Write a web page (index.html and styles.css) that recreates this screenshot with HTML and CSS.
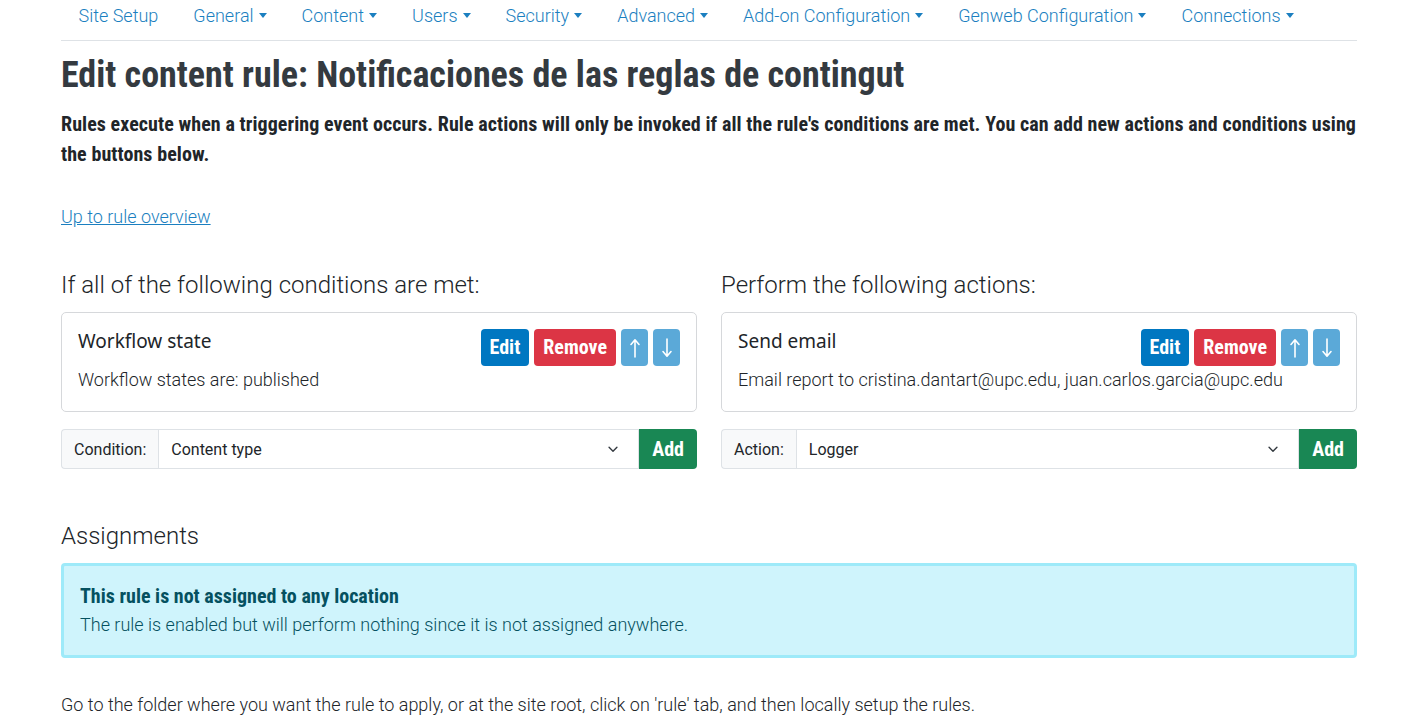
FILE: index.html
```html
<!DOCTYPE html>
<html lang="en">
<head>
<meta charset="utf-8">
<title>Edit content rule</title>
<link rel="stylesheet" href="styles.css">
</head>
<body>
<div class="page">
  <nav class="topnav">
    <a class="nav-link" href="#">Site Setup</a>
    <a class="nav-link dd" href="#">General</a>
    <a class="nav-link dd" href="#">Content</a>
    <a class="nav-link dd" href="#">Users</a>
    <a class="nav-link dd" href="#">Security</a>
    <a class="nav-link dd" href="#">Advanced</a>
    <a class="nav-link dd" href="#">Add-on Configuration</a>
    <a class="nav-link dd" href="#">Genweb Configuration</a>
    <a class="nav-link dd" href="#">Connections</a>
  </nav>

  <h1 class="title">Edit content rule: Notificaciones de las reglas de contingut</h1>
  <p class="lead">Rules execute when a triggering event occurs. Rule actions will only be invoked if all the rule's conditions are met. You can add new actions and conditions using the buttons below.</p>

  <p class="back"><a href="#">Up to rule overview</a></p>

  <div class="cols">
    <section class="col">
      <h2 class="sec-title">If all of the following conditions are met:</h2>
      <div class="card">
        <div class="card-row">
          <h3 class="card-title">Workflow state</h3>
          <div class="btns">
            <button class="btn btn-edit">Edit</button>
            <button class="btn btn-remove">Remove</button>
            <button class="btn btn-move" aria-label="Move up"><svg viewBox="0 0 12 24" width="12" height="24"><path d="M6 21V4M2 8.5L6 3.8l4 4.7" fill="none" stroke="#fff" stroke-width="1.6" stroke-linecap="round" stroke-linejoin="round"/></svg></button>
            <button class="btn btn-move" aria-label="Move down"><svg viewBox="0 0 12 24" width="12" height="24"><path d="M6 3v17M2 15.5L6 20.2l4-4.7" fill="none" stroke="#fff" stroke-width="1.6" stroke-linecap="round" stroke-linejoin="round"/></svg></button>
          </div>
        </div>
        <div class="card-desc">Workflow states are: published</div>
      </div>
      <div class="input-group">
        <span class="ig-label">Condition:</span>
        <div class="ig-select"><span>Content type</span>
          <svg class="chev" viewBox="0 0 16 16" width="14" height="14"><path d="M3.5 6l4.5 4.5L12.5 6" fill="none" stroke="#343a40" stroke-width="1.6" stroke-linecap="round" stroke-linejoin="round"/></svg>
        </div>
        <button class="btn btn-add">Add</button>
      </div>
    </section>

    <section class="col">
      <h2 class="sec-title">Perform the following actions:</h2>
      <div class="card">
        <div class="card-row">
          <h3 class="card-title">Send email</h3>
          <div class="btns">
            <button class="btn btn-edit">Edit</button>
            <button class="btn btn-remove">Remove</button>
            <button class="btn btn-move" aria-label="Move up"><svg viewBox="0 0 12 24" width="12" height="24"><path d="M6 21V4M2 8.5L6 3.8l4 4.7" fill="none" stroke="#fff" stroke-width="1.6" stroke-linecap="round" stroke-linejoin="round"/></svg></button>
            <button class="btn btn-move" aria-label="Move down"><svg viewBox="0 0 12 24" width="12" height="24"><path d="M6 3v17M2 15.5L6 20.2l4-4.7" fill="none" stroke="#fff" stroke-width="1.6" stroke-linecap="round" stroke-linejoin="round"/></svg></button>
          </div>
        </div>
        <div class="card-desc">Email report to cristina.dantart@upc.edu, juan.carlos.garcia@upc.edu</div>
      </div>
      <div class="input-group">
        <span class="ig-label">Action:</span>
        <div class="ig-select"><span>Logger</span>
          <svg class="chev" viewBox="0 0 16 16" width="14" height="14"><path d="M3.5 6l4.5 4.5L12.5 6" fill="none" stroke="#343a40" stroke-width="1.6" stroke-linecap="round" stroke-linejoin="round"/></svg>
        </div>
        <button class="btn btn-add">Add</button>
      </div>
    </section>
  </div>

  <h2 class="sec-title assign">Assignments</h2>
  <div class="alert">
    <div class="alert-title">This rule is not assigned to any location</div>
    <div class="alert-text">The rule is enabled but will perform nothing since it is not assigned anywhere.</div>
  </div>

  <p class="foot">Go to the folder where you want the rule to apply, or at the site root, click on 'rule' tab, and then locally setup the rules.</p>
</div>
</body>
</html>
```

FILE: styles.css
```css
* { box-sizing: border-box; }
html, body { margin: 0; padding: 0; background: #fff; }
body {
  font-family: Roboto, "Liberation Sans", sans-serif;
  font-weight: 300;
  font-size: 18px;
  color: #212529;
}
.page {
  width: 1296px;
  margin-left: 61px;
}
.topnav {
  display: flex;
  height: 41px;
  border-bottom: 1px solid #dee2e6;
  align-items: flex-start;
}
.nav-link {
  display: inline-flex;
  align-items: center;
  padding: 4px 17.5px 0;
  height: 28px;
  color: #1b7fc0;
  text-decoration: none;
  font-size: 18px;
  font-weight: 300;
  line-height: 24px;
}
.nav-link.dd::after {
  content: "";
  display: inline-block;
  margin-left: 5px;
  border-top: 5px solid #1b7fc0;
  border-left: 4.5px solid transparent;
  border-right: 4.5px solid transparent;
  position: relative;
  top: -1px;
}
.title, .lead, .btn, .alert-title {
  font-family: "Roboto Condensed", "Liberation Sans Narrow", "Liberation Sans", sans-serif;
}
.title {
  margin: 13px 0 0;
  font-size: 36px;
  line-height: 43px;
  font-weight: 700;
  color: #343a40;
}
.lead {
  margin: 12px 0 0;
  font-size: 20px;
  line-height: 30px;
  font-weight: 700;
  letter-spacing: 0.07px;
  color: #212529;
}
.back {
  margin: 34px 0 0;
  line-height: 27px;
}
.back a {
  color: #1b7fc0;
  text-decoration: underline;
  font-weight: 300;
}
.cols {
  display: grid;
  grid-template-columns: 1fr 1fr;
  column-gap: 24px;
  margin-top: 39px;
}
.sec-title {
  margin: 0;
  padding-top: 2px;
  font-size: 24px;
  line-height: 29px;
  font-weight: 300;
  color: #212529;
}
.card {
  margin-top: 12px;
  border: 1px solid #d6d8db;
  border-radius: 5px;
  padding: 16px 16px 18px;
}
.card-row {
  display: flex;
  justify-content: space-between;
  align-items: flex-start;
}
.card-title {
  margin: 0;
  font-family: "Noto Sans", "Open Sans", sans-serif;
  font-weight: 400;
  font-size: 19px;
  line-height: 25px;
  color: #212529;
}
.btns {
  display: flex;
  gap: 5px;
}
.btn {
  border: 0;
  border-radius: 4px;
  height: 37px;
  padding: 0 9px;
  color: #fff;
  font-size: 20px;
  font-weight: 700;
  line-height: 37px;
  cursor: pointer;
}
.btn-edit { background: #0077c1; }
.btn-remove { background: #dc3545; }
.btn-move {
  background: #5ba9d8;
  width: 27px;
  padding: 0;
  display: flex;
  align-items: center;
  justify-content: center;
}
.card-desc {
  line-height: 27px;
}
.input-group {
  display: flex;
  margin-top: 17px;
  height: 40px;
}
.ig-label {
  display: flex;
  align-items: center;
  padding: 0 12px;
  background: #f8f9fa;
  border: 1px solid #dee2e6;
  border-right: 0;
  border-radius: 4px 0 0 4px;
  font-weight: 400;
  font-size: 16px;
  color: #212529;
}
.ig-select {
  flex: 1;
  display: flex;
  align-items: center;
  justify-content: space-between;
  padding: 0 18px 0 12px;
  border: 1px solid #dee2e6;
  font-weight: 400;
  font-size: 16px;
  color: #212529;
}
.btn-add {
  height: 40px;
  line-height: 40px;
  background: #198754;
  border-radius: 0 4px 4px 0;
  padding: 0 13px;
  font-size: 20px;
}
.assign { margin-top: 51px; }
.alert {
  margin-top: 12px;
  background: #cff4fc;
  border: 3px solid #9eeaf9;
  border-radius: 4px;
  padding: 19px 16px 17px;
  color: #055160;
}
.alert-title {
  font-weight: 700;
  font-size: 20px;
  line-height: 22px;
  margin-bottom: 4px;
}
.alert-text {
  line-height: 27px;
}
.foot {
  margin: 33px 0 0;
  line-height: 27px;
}
```
